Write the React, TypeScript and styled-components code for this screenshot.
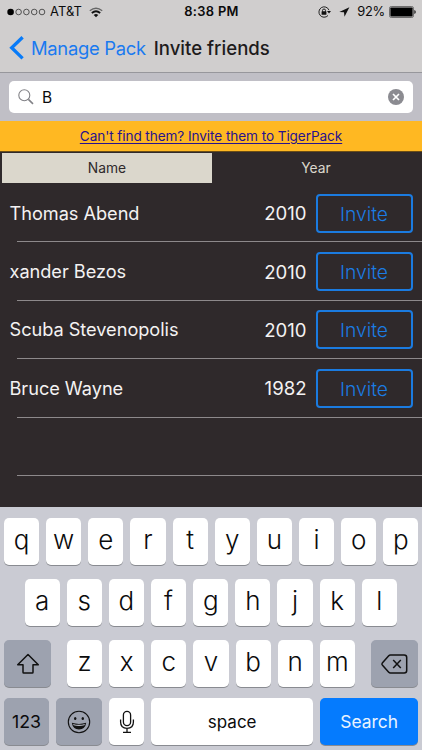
import React from 'react';
import styled, { createGlobalStyle } from 'styled-components';

const GlobalStyle = createGlobalStyle`
  * { box-sizing: border-box; }
  body { margin: 0; background: #2f292b; }
  button, input { font: inherit; letter-spacing: inherit; margin: 0; padding: 0; border: 0; }
`;

const Screen = styled.main`
  width: 422px;
  height: 750px;
  display: flex;
  flex-direction: column;
  overflow: hidden;
  background: #2f292b;
  font-family: Inter, 'Liberation Sans', sans-serif;
  color: #0b0b0c;
`;

const TopBar = styled.header`
  height: 73px;
  flex: none;
  background: #d0cece;
  border-bottom: 1px solid #97979c;
`;

const StatusBar = styled.div`
  height: 24px;
  display: grid;
  grid-template-columns: 1fr auto 1fr;
  align-items: center;
  padding: 0 6px 0 7px;
  font-size: 12.9px;
  line-height: 24px;
`;

const StatusGroup = styled.div<{ $end?: boolean }>`
  display: flex;
  align-items: center;
  justify-content: ${(p) => (p.$end ? 'flex-end' : 'flex-start')};
`;

const Carrier = styled.span`
  margin: 0 7px 0 4px;
  letter-spacing: 0.1px;
`;

const Clock = styled.span`
  font-weight: 600;
  letter-spacing: 0.35px;
`;

const LocationSlot = styled.span`
  display: flex;
  margin: 0 7px;
`;

const Battery = styled.span`
  margin-right: 4px;
  letter-spacing: -0.25px;
`;

const NavRow = styled.nav`
  height: 48px;
  display: flex;
  align-items: center;
  padding-left: 9px;
`;

const BackButton = styled.button`
  display: flex;
  align-items: center;
  gap: 7px;
  background: none;
  color: #1a7af0;
  font-size: 18.4px;
  line-height: 24px;
  letter-spacing: -0.3px;
`;

const Title = styled.h1`
  margin: 0 0 0 8px;
  font-size: 18.6px;
  line-height: 24px;
  font-weight: 500;
  letter-spacing: 0;
  color: #1d1b1c;
`;

const SearchBar = styled.div`
  height: 48px;
  flex: none;
  padding: 8px 9px 9px;
  background: #c0bfc6;
`;

const SearchField = styled.label`
  height: 32px;
  display: flex;
  align-items: center;
  padding: 0 9px 0 9px;
  border-radius: 5px;
  background: #fff;
`;

const SearchInput = styled.input`
  flex: 1;
  min-width: 0;
  margin-left: 8px !important;
  outline: 0;
  background: none;
  font-size: 15.5px !important;
  color: #0b0b0c;
`;

const Banner = styled.div`
  height: 31px;
  flex: none;
  display: flex;
  align-items: center;
  justify-content: center;
  background: #ffb822;
  border-bottom: 1px solid #6b4d16;
`;

const BannerLink = styled.a`
  color: #27118e;
  font-size: 13.6px;
  line-height: 18px;
  letter-spacing: -0.08px;
  text-decoration: underline;
  text-underline-offset: 2px;
`;

const SortTabs = styled.div`
  height: 31px;
  flex: none;
  display: grid;
  grid-template-columns: 210px 1fr;
  padding: 1px 2px 0;
`;

const SortTab = styled.button<{ $active?: boolean }>`
  background: ${(p) => (p.$active ? '#dbd7cc' : 'transparent')};
  color: ${(p) => (p.$active ? '#2f292b' : '#dbd7cc')};
  font-size: 13.8px;
  line-height: 30px;
`;

const FriendList = styled.ul`
  flex: 1;
  min-height: 0;
  margin: 0;
  padding: 1px 0 0;
  list-style: none;
  overflow: hidden;
`;

const FriendRow = styled.li`
  height: 58.4px;
  display: flex;
  align-items: center;
  padding: 0 9.5px 0 9.5px;
  background: linear-gradient(#8d898b, #8d898b) 17px 100% / 100% 1px no-repeat;
  color: #f4f2f2;
  font-size: 18.2px;
  line-height: 24px;
`;

const FriendName = styled.span`
  flex: 1;
  margin-top: -1px;
  letter-spacing: -0.04px;
`;

const FriendYear = styled.span`
  margin-right: 9px;
  font-size: 18.6px;
`;

const InviteButton = styled.button`
  width: 97px;
  height: 39px;
  border: 2px solid #1b7be0;
  border-radius: 4px;
  background: none;
  color: #1b7ce4;
  font-size: 19.3px;
  font-weight: 350;
  line-height: 36px;
`;

const Keyboard = styled.section`
  height: 243px;
  flex: none;
  display: flex;
  flex-direction: column;
  gap: 13px;
  padding: 11px 4px 0;
  background: #cacbd3;
`;

const KeyRow = styled.div<{ $inset?: number; $spread?: boolean }>`
  height: 48px;
  flex: none;
  display: flex;
  gap: 7px;
  padding: 0 ${(p) => p.$inset ?? 0}px;
  justify-content: ${(p) => (p.$spread ? 'space-between' : 'flex-start')};

  &:last-child { margin-top: -3px; }
`;

const LetterGroup = styled.div`
  display: flex;
  gap: 7px;
`;

type KeyTone = 'light' | 'dark' | 'action';

const tones: Record<KeyTone, string> = {
  light: '#fff',
  dark: '#9da2af',
  action: '#057bfe',
};

const Key = styled.button<{ $width?: number; $tone?: KeyTone; $size?: number; $weight?: number }>`
  width: ${(p) => p.$width ?? 35.15}px;
  height: 47.4px;
  flex: none;
  display: flex;
  align-items: center;
  justify-content: center;
  padding-bottom: ${(p) => (p.$size ? 0 : 4)}px;
  border-radius: 5px;
  background: ${(p) => tones[p.$tone ?? 'light']};
  box-shadow: 0 1px 0 #898b91;
  color: ${(p) => (p.$tone === 'action' ? '#e9f3ff' : '#0b0b0c')};
  font-size: ${(p) => p.$size ?? 26}px;
  font-weight: ${(p) => p.$weight ?? 360};
  line-height: 30px;
`;

const SignalDots = () => (
  <svg width="39" height="8" viewBox="0 0 39 8">
    <circle cx="3.6" cy="4" r="3.3" fill="#000" />
    {[11.6, 19.4, 27.2, 35].map((x) => (
      <circle key={x} cx={x} cy="4" r="2.8" fill="none" stroke="#333" strokeWidth="0.8" />
    ))}
  </svg>
);

const WifiIcon = () => (
  <svg width="14" height="11" viewBox="0 0 14 11" fill="none" stroke="#111">
    <path d="M0.8 3.8 Q7 -1.3 13.2 3.8" strokeWidth="1.3" stroke="#666" />
    <path d="M2.8 6 Q7 2.5 11.2 6" strokeWidth="1.7" />
    <path d="M4.7 7.9 Q7 6 9.3 7.9 L7 10.3Z" fill="#111" stroke="none" />
  </svg>
);

const RotationLockIcon = () => (
  <svg width="14" height="12" viewBox="0 0 14 12" fill="none" stroke="#111">
    <path d="M11 4.2 A5.2 5.2 0 1 0 10 9.5" strokeWidth="0.9" />
    <path d="M9 5 H13 L11 7.5Z" fill="#111" stroke="none" />
    <path d="M4.5 5.7 V4.5 A1.5 1.5 0 0 1 7.5 4.5 V5.7" strokeWidth="0.9" />
    <rect x="3.6" y="5.3" width="4.8" height="3.5" rx="0.4" fill="#111" stroke="none" />
  </svg>
);

const LocationIcon = () => (
  <svg width="11" height="10" viewBox="0 0 11 10">
    <path d="M10.4 0.2 L5.5 9.7 L5 5.3 L0.3 5Z" fill="#111" />
  </svg>
);

const BatteryIcon = () => (
  <svg width="27" height="12" viewBox="0 0 27 12">
    <rect x="0.5" y="0.5" width="24" height="11" rx="1.8" fill="none" stroke="#555" strokeWidth="0.8" />
    <rect x="1.4" y="1.5" width="22.2" height="9" rx="0.8" fill="#000" />
    <path d="M25.3 4 Q26.8 4.3 26.8 6 Q26.8 7.7 25.3 8Z" fill="#222" />
  </svg>
);

const BackChevron = () => (
  <svg width="15" height="24" viewBox="0 0 15 24" fill="none" stroke="#087bf8" strokeWidth="3.3">
    <path d="M13.6 1.2 L2.7 11.8 L13.6 22.4" />
  </svg>
);

const MagnifierIcon = () => (
  <svg width="16" height="16" viewBox="0 0 16 16" fill="none" stroke="#828287">
    <circle cx="6.3" cy="6.3" r="5.5" strokeWidth="1.1" />
    <path d="M10.4 10.4 L15 14.9" strokeWidth="1.6" />
  </svg>
);

const ClearIcon = () => (
  <svg width="16" height="16" viewBox="0 0 16 16">
    <circle cx="8" cy="8" r="8" fill="#8b8b91" />
    <path d="M5 5 L11 11 M11 5 L5 11" stroke="#fff" strokeWidth="1.7" />
  </svg>
);

const ShiftIcon = () => (
  <svg width="24" height="22" viewBox="0 0 24 22" fill="none" stroke="#111" strokeWidth="1.5" strokeLinejoin="round">
    <path d="M12 1.5 L22.3 11.7 H17 V19.2 Q17 20 16.2 20 H7.8 Q7 20 7 19.2 V11.7 H1.7Z" />
  </svg>
);

const DeleteIcon = () => (
  <svg width="27" height="20" viewBox="0 0 27 20" fill="none" stroke="#111" strokeWidth="1.5" strokeLinejoin="round">
    <path d="M9.5 1 H23.2 Q25.7 1 25.7 3.5 V16.5 Q25.7 19 23.2 19 H9.5 Q8.4 19 7.5 18 L1.3 10.9 Q0.6 10 1.3 9.1 L7.5 2 Q8.4 1 9.5 1Z" />
    <path d="M12.2 6 L19.8 14 M19.8 6 L12.2 14" strokeWidth="1.5" />
  </svg>
);

const EmojiIcon = () => (
  <svg width="24" height="24" viewBox="0 0 24 24" fill="none" stroke="#111">
    <circle cx="12" cy="12" r="10.7" strokeWidth="1.1" />
    <ellipse cx="8.2" cy="8.4" rx="1.2" ry="1.5" fill="#111" stroke="none" />
    <ellipse cx="15.8" cy="8.4" rx="1.2" ry="1.5" fill="#111" stroke="none" />
    <path d="M4.8 12.8 Q12 15 19.2 12.8 Q18.2 19.4 12 19.4 Q5.8 19.4 4.8 12.8Z" fill="#111" stroke="none" />
    <path d="M6 13.9 Q12 15.6 18 13.9 L17.4 15.2 Q12 16.6 6.6 15.2Z" fill="#b9bdc7" stroke="none" />
  </svg>
);

const MicIcon = () => (
  <svg width="16" height="24" viewBox="0 0 16 24" fill="none" stroke="#111" strokeWidth="1.3">
    <rect x="4.4" y="1.3" width="7.2" height="14.4" rx="3.6" />
    <path d="M1.6 9.5 V12 Q1.6 18.3 8 18.3 Q14.4 18.3 14.4 12 V9.5 M8 18.3 V22.3 M4 22.4 H12" />
  </svg>
);

const friends = [
  { name: 'Thomas Abend', year: 2010 },
  { name: 'xander Bezos', year: 2010 },
  { name: 'Scuba Stevenopolis', year: 2010 },
  { name: 'Bruce Wayne', year: 1982 },
];

const letterKeys = (letters: string) => [...letters].map((letter) => <Key key={letter}>{letter}</Key>);

export default function App() {
  return (
    <>
      <GlobalStyle />
      <Screen>
        <TopBar>
          <StatusBar>
            <StatusGroup>
              <SignalDots />
              <Carrier>AT&amp;T</Carrier>
              <WifiIcon />
            </StatusGroup>
            <Clock>8:38 PM</Clock>
            <StatusGroup $end>
              <RotationLockIcon />
              <LocationSlot><LocationIcon /></LocationSlot>
              <Battery>92%</Battery>
              <BatteryIcon />
            </StatusGroup>
          </StatusBar>
          <NavRow>
            <BackButton>
              <BackChevron />
              Manage Pack
            </BackButton>
            <Title>Invite friends</Title>
          </NavRow>
        </TopBar>
        <SearchBar>
          <SearchField>
            <MagnifierIcon />
            <SearchInput defaultValue="B" aria-label="Search friends" />
            <ClearIcon />
          </SearchField>
        </SearchBar>
        <Banner>
          <BannerLink href="#">Can't find them? Invite them to TigerPack</BannerLink>
        </Banner>
        <SortTabs>
          <SortTab $active>Name</SortTab>
          <SortTab>Year</SortTab>
        </SortTabs>
        <FriendList>
          {friends.map((friend) => (
            <FriendRow key={friend.name}>
              <FriendName>{friend.name}</FriendName>
              <FriendYear>{friend.year}</FriendYear>
              <InviteButton>Invite</InviteButton>
            </FriendRow>
          ))}
          <FriendRow />
        </FriendList>
        <Keyboard>
          <KeyRow>{letterKeys('qwertyuiop')}</KeyRow>
          <KeyRow $inset={20.6}>{letterKeys('asdfghjkl')}</KeyRow>
          <KeyRow $spread>
            <Key $tone="dark" $width={47} $size={20}><ShiftIcon /></Key>
            <LetterGroup>{letterKeys('zxcvbnm')}</LetterGroup>
            <Key $tone="dark" $width={47} $size={20}><DeleteIcon /></Key>
          </KeyRow>
          <KeyRow>
            <Key $tone="dark" $width={45} $size={17.8} $weight={400}>123</Key>
            <Key $tone="dark" $width={46} $size={20}><EmojiIcon /></Key>
            <Key $size={20}><MicIcon /></Key>
            <Key $width={162} $size={17} $weight={400}>space</Key>
            <Key $tone="action" $width={98} $size={17.4} $weight={400}>Search</Key>
          </KeyRow>
        </Keyboard>
      </Screen>
    </>
  );
}
